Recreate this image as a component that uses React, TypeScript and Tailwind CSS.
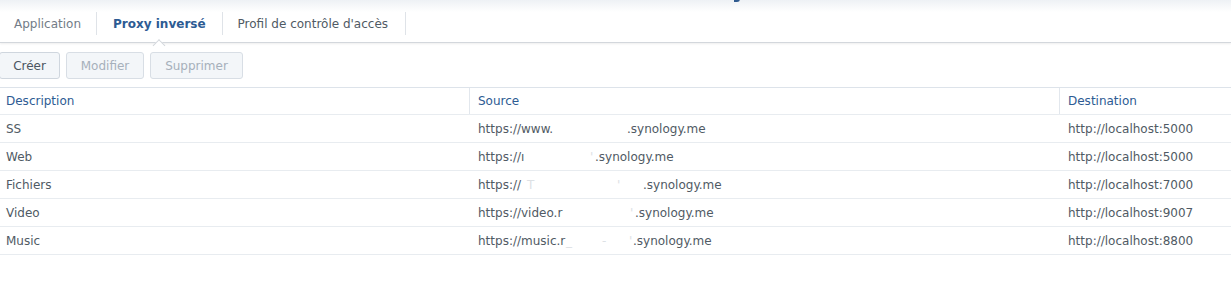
import React from "react";

type Row = { d: string; pre: string; preW: number; faint?: { x: number; t: string }[]; dest: string };

const rows: Row[] = [
  { d: "SS", pre: "https://www.", preW: 149, dest: "http://localhost:5000" },
  { d: "Web", pre: "https://\u0131", preW: 117, faint: [{ x: 112, t: "'" }], dest: "http://localhost:5000" },
  { d: "Fichiers", pre: "https://", preW: 165, faint: [{ x: 49, t: "T" }, { x: 139, t: "'" }], dest: "http://localhost:7000" },
  { d: "Video", pre: "https://video.r", preW: 157, faint: [{ x: 152, t: "'" }], dest: "http://localhost:9007" },
  { d: "Music", pre: "https://music.r", preW: 155, faint: [{ x: 88, t: "_" }, { x: 124, t: "-" }, { x: 151, t: "'" }], dest: "http://localhost:8800" },
];

export default function App() {
  return (
    <div
      className="w-[1231px] h-[301px] bg-white overflow-hidden text-[12px] text-[#505a64]"
      style={{ fontFamily: '"DejaVu Sans", Verdana, sans-serif' }}
    >
      <div className="relative h-[43px] flex items-center pt-[5px] border-b border-[#d3d7dc] shadow-[0_1px_2px_rgba(0,0,0,0.07)] bg-[linear-gradient(to_bottom,#eef1f5_0px,#ffffff_12px)]">
        <span className="absolute left-[734px] top-[-2px] w-[6px] h-[4px] border-b-2 border-r-2 border-[#2f5a8f] rounded-br-[3px]" />
        <div className="pl-[14px] pr-[15px] text-[#727c87]">Application</div>
        <div className="w-px h-[23px] bg-[#dfe3e8]" />
        <div className="relative pl-[16px] pr-[16px] font-bold text-[#2d5b93]">
          Proxy inversé
          <span className="absolute left-1/2 -translate-x-1/2 top-[26px] w-[9px] h-[9px] rotate-45 bg-white border-l border-t border-[#d3d7dc]" />
        </div>
        <div className="w-px h-[23px] bg-[#dfe3e8]" />
        <div className="pl-[15px] pr-[17px] text-[#505a64]">Profil de contrôle d'accès</div>
        <div className="w-px h-[23px] bg-[#dfe3e8]" />
      </div>
      <div className="flex gap-[6px] pt-[9px] pb-[8px] -ml-px">
        <button className="w-[61px] h-[27px] rounded-[3px] border border-[#cfd6de] bg-[#f3f6f9] text-[#4b5560] flex items-center justify-center">Créer</button>
        <button className="w-[78px] h-[27px] rounded-[3px] border border-[#d8dee5] bg-[#f3f6f9] text-[#a6b0bb] flex items-center justify-center">Modifier</button>
        <button className="w-[93px] h-[27px] rounded-[3px] border border-[#d8dee5] bg-[#f3f6f9] text-[#a6b0bb] flex items-center justify-center">Supprimer</button>
      </div>
      <div className="border-t border-[#dde3ea]">
        <div className="grid grid-cols-[470px_590px_1fr] h-[27px] border-b border-[#e8ecf0] text-[#2d5b93]">
          <div className="pl-[6px] flex items-center border-r border-[#e2e7ed]">Description</div>
          <div className="pl-[8px] flex items-center border-r border-[#e2e7ed]">Source</div>
          <div className="pl-[8px] flex items-center">Destination</div>
        </div>
        {rows.map((r) => (
          <div key={r.d} className="grid grid-cols-[470px_590px_1fr] h-[28px] items-center border-b border-[#e8ecf0]">
            <div className="pl-[6px]">{r.d}</div>
            <div className="pl-[8px] flex">
              <span className="relative shrink-0 whitespace-nowrap" style={{ width: r.preW }}>
                {r.pre}
                {r.faint?.map((f, i) => (
                  <span key={i} className="absolute top-0 text-[#dde1e5]" style={{ left: f.x }}>
                    {f.t}
                  </span>
                ))}
              </span>
              <span>.synology.me</span>
            </div>
            <div className="pl-[8px]">{r.dest}</div>
          </div>
        ))}
      </div>
    </div>
  );
}
